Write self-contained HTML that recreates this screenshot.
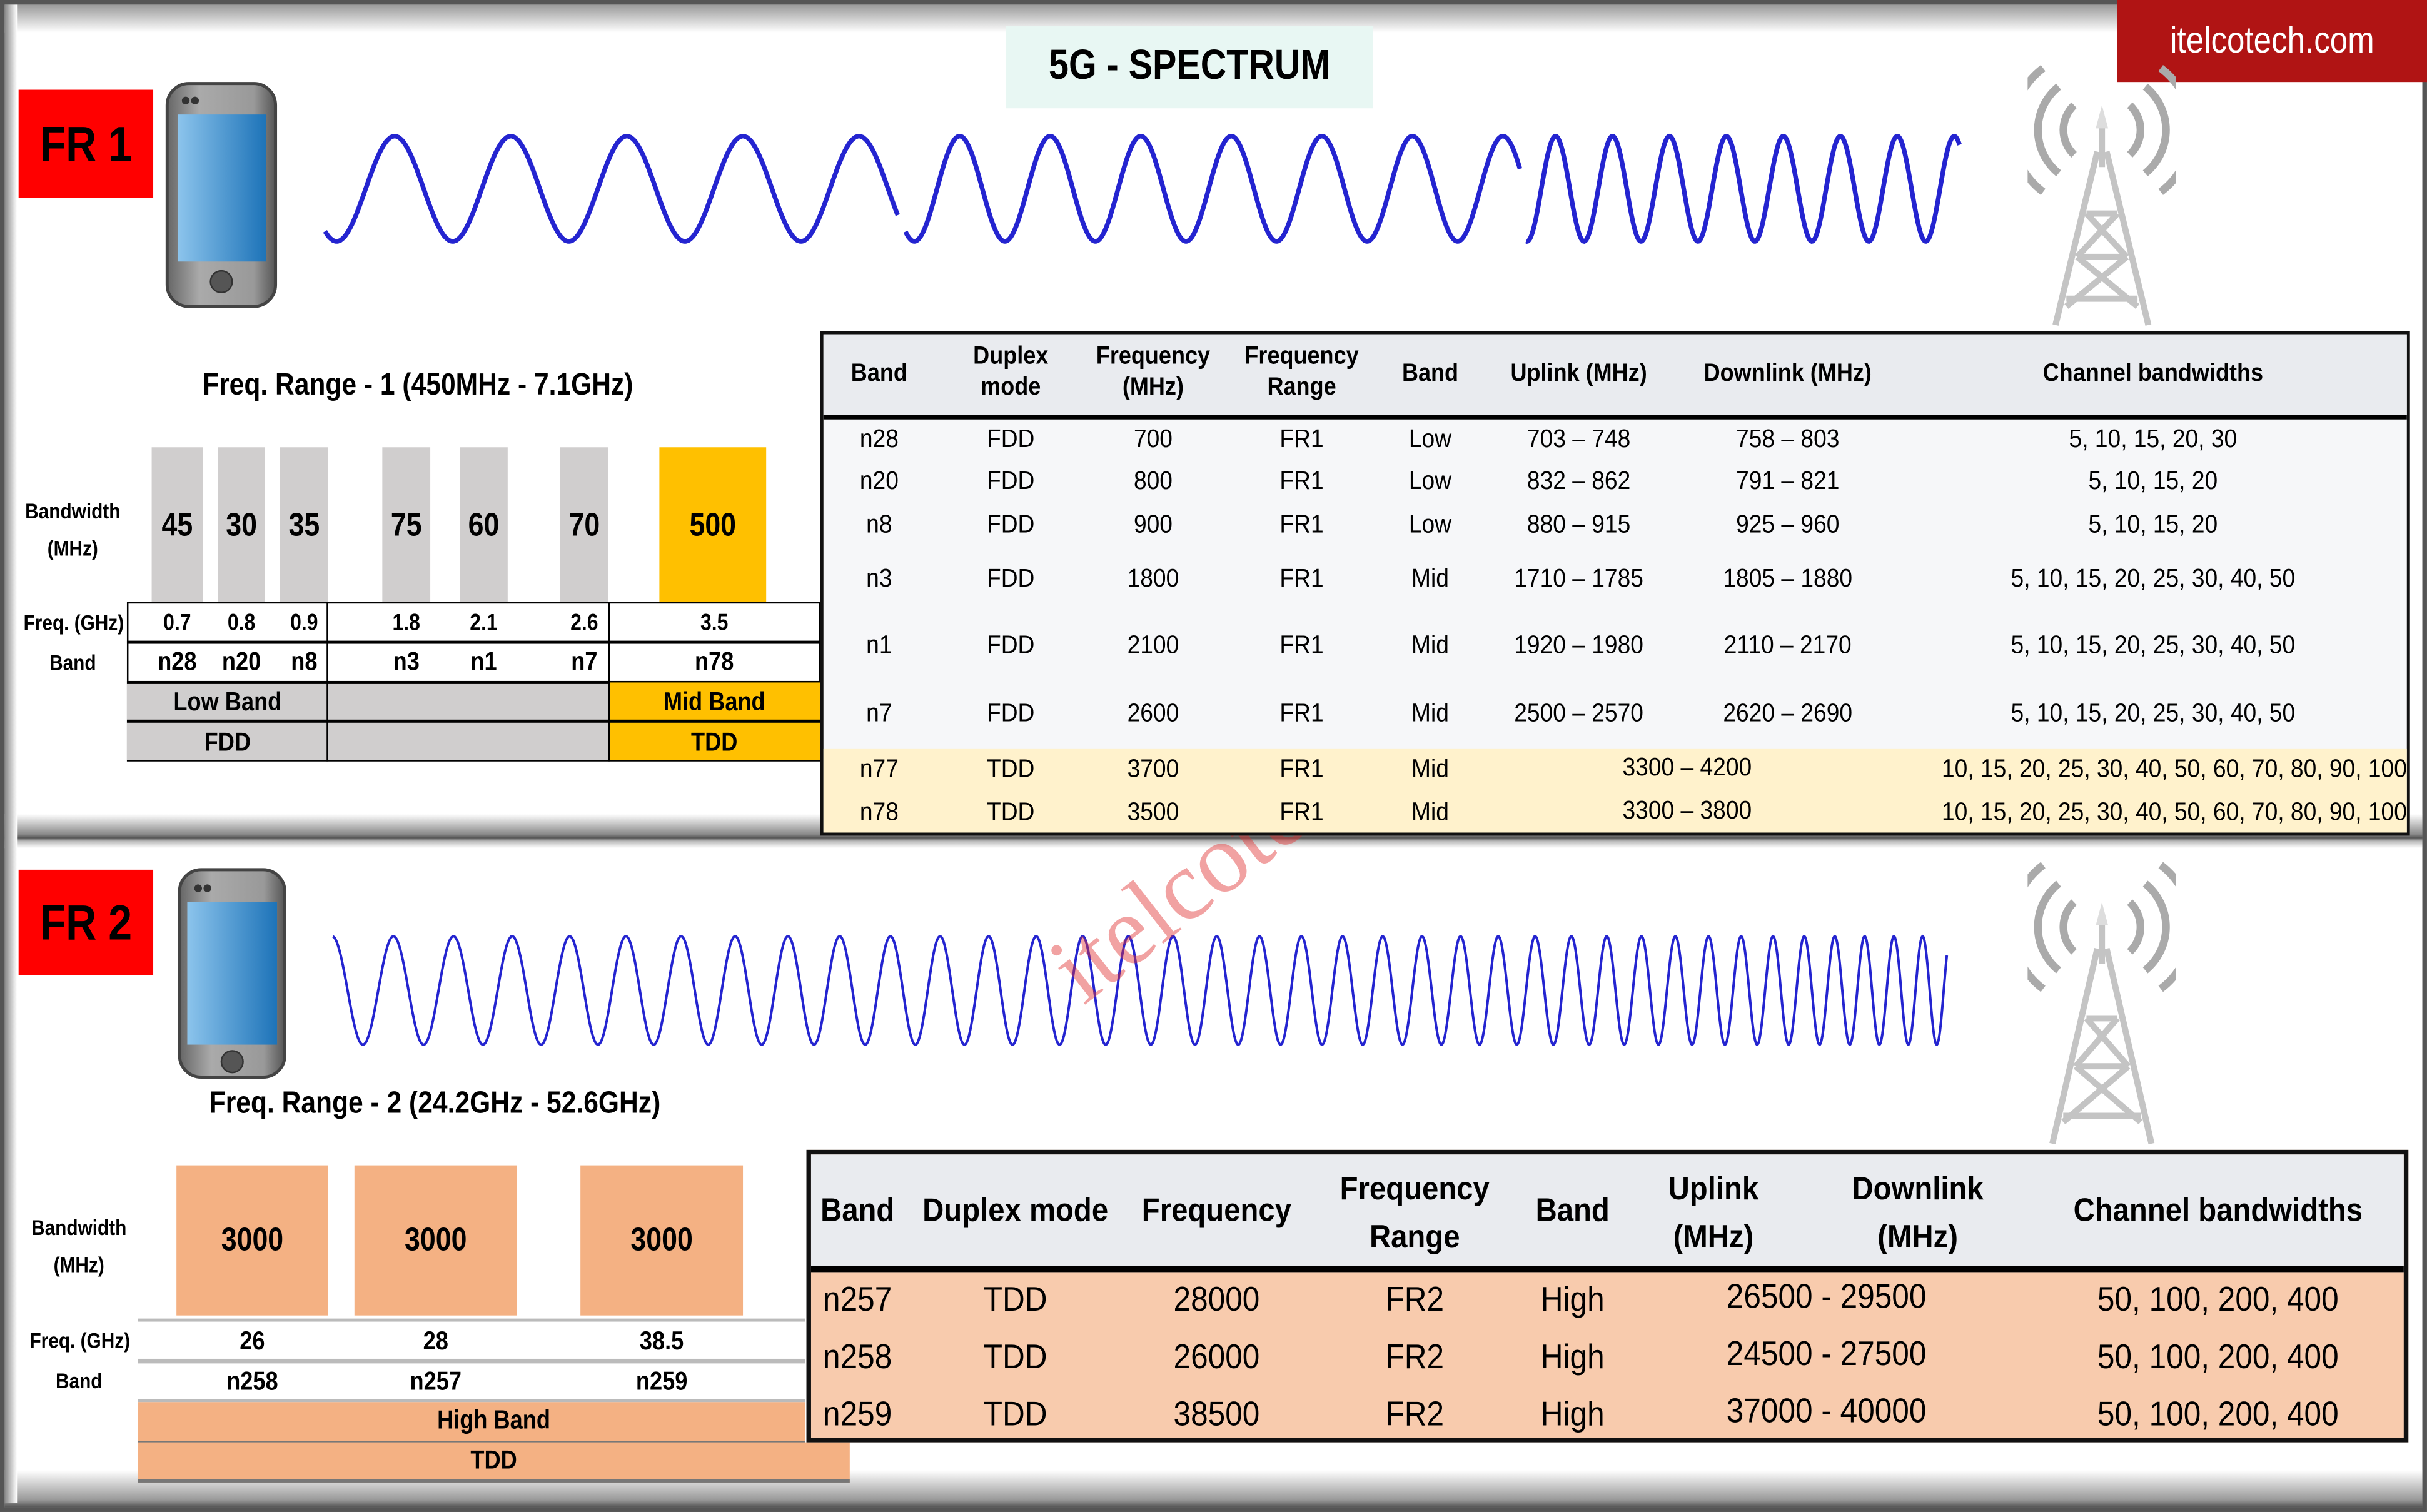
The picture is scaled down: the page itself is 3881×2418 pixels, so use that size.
<!DOCTYPE html>
<html><head><meta charset="utf-8">
<style>
html,body{margin:0;padding:0;background:#fff;overflow:hidden}
body{width:3881px;height:2418px}
#s{position:absolute;left:0;top:0;width:1568px;height:977px;transform:scale(2.4751,2.4749);transform-origin:0 0;font-family:"Liberation Sans Narrow","Liberation Sans",sans-serif;color:#000}
.a{position:absolute}
.c{position:absolute;text-align:center;white-space:nowrap;transform:scaleX(.86)}
.t{transform:scaleX(.91)}
.b{font-weight:bold}
.gbar{position:absolute;background:#d0cece;top:289px;height:100px}
.obar{position:absolute;background:#f4b183;top:753px;height:97px}
</style></head><body>
<div id="s">
<div class="a" style="left:0;top:0;width:1568px;height:977px;border:3px solid #555;box-sizing:border-box"></div>
<div class="a" style="left:3px;top:3px;width:1562px;height:18px;background:linear-gradient(#9a9a9a,#fff)"></div>
<div class="a" style="left:3px;top:526px;width:1562px;height:22px;background:linear-gradient(#fff,#888 60%,#555 70%,#bbb 80%,#fff)"></div>
<div class="a" style="left:3px;top:950px;width:1562px;height:24px;background:linear-gradient(#fff,#999 80%,#555)"></div>
<div class="a" style="left:3px;top:3px;width:8px;height:968px;background:linear-gradient(90deg,#888,#fff)"></div>

<div class="a" style="left:650px;top:17px;width:237px;height:53px;background:#e8f7f3"></div>
<div class="c b" style="left:650px;top:17px;width:237px;height:53px;line-height:50px;font-size:27px">5G - SPECTRUM</div>
<div class="a" style="left:1368px;top:0;width:200px;height:53px;background:#b01414"></div>
<div class="c" style="left:1368px;top:0;width:200px;height:53px;line-height:54px;color:#fff;font-size:24px">itelcotech.com</div>

<div class="a" style="left:12px;top:58px;width:87px;height:70px;background:#f00"></div>
<div class="c b" style="left:12px;top:58px;width:87px;height:70px;line-height:70px;font-size:32px">FR 1</div>
<div class="a" style="left:12px;top:562px;width:87px;height:68px;background:#f00"></div>
<div class="c b" style="left:12px;top:562px;width:87px;height:68px;line-height:68px;font-size:32px">FR 2</div>

<svg class="a" style="left:105px;top:52px" width="76" height="148" viewBox="0 0 76 148">
<defs><linearGradient id="sc" x1="0" y1="0" x2="1" y2="0"><stop offset="0" stop-color="#8cc4ec"/><stop offset="1" stop-color="#1d73b8"/></linearGradient>
<linearGradient id="bd" x1="0" y1="0" x2="1" y2="0"><stop offset="0" stop-color="#666"/><stop offset=".3" stop-color="#aaa"/><stop offset=".8" stop-color="#999"/><stop offset="1" stop-color="#555"/></linearGradient></defs>
<rect x="3" y="2" width="70" height="144" rx="14" fill="url(#bd)" stroke="#444" stroke-width="2"/>
<circle cx="15" cy="13" r="2.5" fill="#333"/><circle cx="21" cy="13" r="2.5" fill="#333"/>
<rect x="10" y="22" width="57" height="95" fill="url(#sc)"/>
<circle cx="38" cy="130" r="7" fill="#555" stroke="#333"/>
</svg>
<svg class="a" style="left:113px;top:560px" width="74" height="138" viewBox="0 0 74 138">
<rect x="3" y="2" width="68" height="134" rx="14" fill="url(#bd)" stroke="#444" stroke-width="2"/>
<circle cx="15" cy="14" r="2.5" fill="#333"/><circle cx="21" cy="14" r="2.5" fill="#333"/>
<rect x="8" y="23" width="58" height="92" fill="url(#sc)"/>
<circle cx="37" cy="126" r="7" fill="#555" stroke="#333"/>
</svg>

<svg class="a" style="left:1310px;top:38px" width="96" height="175" viewBox="0 0 96 175">
<g fill="none" stroke="#aaa" stroke-width="5">
<path d="M30 30 A22 22 0 0 0 30 62"/><path d="M66 30 A22 22 0 0 1 66 62"/>
<path d="M20 18 A36 36 0 0 0 20 74"/><path d="M76 18 A36 36 0 0 1 76 74"/>
<path d="M10 6 A50 50 0 0 0 10 86"/><path d="M86 6 A50 50 0 0 1 86 86"/>
</g>
<g stroke="#c4c4c4" stroke-width="4" fill="none">
<path d="M48 40 L48 70"/><path d="M45 60 L18 172"/><path d="M51 60 L78 172"/>
<path d="M38 100 L58 100 M32 128 L64 128 M25 155 L71 155"/>
<path d="M38 100 L64 128 M58 100 L32 128 M32 128 L71 160 M64 128 L25 160"/>
</g>
<path d="M44 45 L48 30 L52 45 Z" fill="#ddd"/>
</svg>
<svg class="a" style="left:1310px;top:553px" width="96" height="190" viewBox="0 0 96 190">
<g fill="none" stroke="#aaa" stroke-width="5">
<path d="M30 30 A22 22 0 0 0 30 62"/><path d="M66 30 A22 22 0 0 1 66 62"/>
<path d="M20 18 A36 36 0 0 0 20 74"/><path d="M76 18 A36 36 0 0 1 76 74"/>
<path d="M10 6 A50 50 0 0 0 10 86"/><path d="M86 6 A50 50 0 0 1 86 86"/>
</g>
<g stroke="#c4c4c4" stroke-width="4" fill="none">
<path d="M48 40 L48 70"/><path d="M45 60 L16 186"/><path d="M51 60 L80 186"/>
<path d="M38 105 L58 105 M31 136 L65 136 M23 168 L73 168"/>
<path d="M38 105 L65 136 M58 105 L31 136 M31 136 L73 172 M65 136 L23 172"/>
</g>
<path d="M44 45 L48 30 L52 45 Z" fill="#ddd"/>
</svg>

<svg class="a" style="left:0;top:0" width="1568" height="977">
<path id="w1" fill="none" stroke="#2424d0" stroke-width="3"/>
<path id="w2" fill="none" stroke="#2424d0" stroke-width="1.6"/>
<text x="700" y="650" transform="rotate(-38 700 650)" font-family="Liberation Serif,serif" font-size="64" fill="#e03030" fill-opacity="0.45">itelcotech</text>
</svg>

<div class="c b" style="left:100px;top:238px;width:340px;font-size:20px">Freq. Range - 1 (450MHz - 7.1GHz)</div>
<div class="c b" style="left:10px;top:318px;width:74px;font-size:14px;line-height:24px">Bandwidth<br>(MHz)</div>
<div class="gbar" style="left:98px;width:33px"></div>
<div class="gbar" style="left:141px;width:30px"></div>
<div class="gbar" style="left:181px;width:31px"></div>
<div class="gbar" style="left:247px;width:31px"></div>
<div class="gbar" style="left:297px;width:31px"></div>
<div class="gbar" style="left:362px;width:31px"></div>
<div class="gbar" style="left:426px;width:69px;background:#ffc000"></div>
<div class="c b" style="left:98px;top:328px;width:33px;font-size:21px">45</div>
<div class="c b" style="left:141px;top:328px;width:30px;font-size:21px">30</div>
<div class="c b" style="left:181px;top:328px;width:31px;font-size:21px">35</div>
<div class="c b" style="left:247px;top:328px;width:31px;font-size:21px">75</div>
<div class="c b" style="left:297px;top:328px;width:31px;font-size:21px">60</div>
<div class="c b" style="left:362px;top:328px;width:31px;font-size:21px">70</div>
<div class="c b" style="left:426px;top:328px;width:69px;font-size:21px">500</div>
<div class="c b" style="left:10px;top:394px;width:74px;font-size:14px">Freq. (GHz)</div>
<div class="c b" style="left:10px;top:420px;width:74px;font-size:14px">Band</div>
<div class="a" style="left:82px;top:389px;width:448px;height:103px;border:1.5px solid #000;box-sizing:border-box"></div>
<div class="a" style="left:82px;top:414px;width:448px;border-top:2px solid #000"></div>
<div class="a" style="left:82px;top:440px;width:448px;height:52px;background:#d0cece;border-top:2px solid #000;border-bottom:1.5px solid #000;box-sizing:border-box"></div>
<div class="a" style="left:393px;top:441px;width:137px;height:50px;background:#ffc000"></div>
<div class="a" style="left:82px;top:465px;width:448px;border-top:2px solid #000"></div>
<div class="a" style="left:211px;top:389px;height:103px;border-left:1.5px solid #000"></div>
<div class="a" style="left:393px;top:389px;height:103px;border-left:1.5px solid #000"></div>
<div class="c b" style="left:98px;top:394px;width:33px;font-size:15px">0.7</div>
<div class="c b" style="left:141px;top:394px;width:30px;font-size:15px">0.8</div>
<div class="c b" style="left:181px;top:394px;width:31px;font-size:15px">0.9</div>
<div class="c b" style="left:247px;top:394px;width:31px;font-size:15px">1.8</div>
<div class="c b" style="left:297px;top:394px;width:31px;font-size:15px">2.1</div>
<div class="c b" style="left:362px;top:394px;width:31px;font-size:15px">2.6</div>
<div class="c b" style="left:393px;top:394px;width:137px;font-size:15px">3.5</div>
<div class="c b" style="left:96px;top:418px;width:37px;font-size:17px">n28</div>
<div class="c b" style="left:139px;top:418px;width:34px;font-size:17px">n20</div>
<div class="c b" style="left:181px;top:418px;width:31px;font-size:17px">n8</div>
<div class="c b" style="left:247px;top:418px;width:31px;font-size:17px">n3</div>
<div class="c b" style="left:297px;top:418px;width:31px;font-size:17px">n1</div>
<div class="c b" style="left:362px;top:418px;width:31px;font-size:17px">n7</div>
<div class="c b" style="left:393px;top:418px;width:137px;font-size:17px">n78</div>
<div class="c b" style="left:82px;top:444px;width:130px;font-size:17px">Low Band</div>
<div class="c b" style="left:393px;top:444px;width:137px;font-size:17px">Mid Band</div>
<div class="c b" style="left:82px;top:470px;width:130px;font-size:17px">FDD</div>
<div class="c b" style="left:393px;top:470px;width:137px;font-size:17px">TDD</div>

<div class="a" style="left:530px;top:214px;width:1027px;height:326px;background:#f6f7f9;border:2px solid #111;box-sizing:border-box"></div>
<div class="a" style="left:532px;top:216px;width:1023px;height:52px;background:#e9ebef;border-bottom:3px solid #000"></div>
<div class="a" style="left:532px;top:484px;width:1023px;height:54px;background:#fff2cc"></div>
<div id="t1"></div>

<div class="c b" style="left:100px;top:702px;width:362px;font-size:20px">Freq. Range - 2 (24.2GHz - 52.6GHz)</div>
<div class="c b" style="left:14px;top:781px;width:74px;font-size:14px;line-height:24px">Bandwidth<br>(MHz)</div>
<div class="obar" style="left:114px;width:98px"></div>
<div class="obar" style="left:229px;width:105px"></div>
<div class="obar" style="left:375px;width:105px"></div>
<div class="c b" style="left:114px;top:790px;width:98px;font-size:21px">3000</div>
<div class="c b" style="left:229px;top:790px;width:105px;font-size:21px">3000</div>
<div class="c b" style="left:375px;top:790px;width:105px;font-size:21px">3000</div>
<div class="c b" style="left:14px;top:858px;width:74px;font-size:14px">Freq. (GHz)</div>
<div class="c b" style="left:14px;top:884px;width:74px;font-size:14px">Band</div>
<div class="a" style="left:89px;top:852px;width:431px;height:54px;border-top:2px solid #bbb;border-bottom:2px solid #bbb;box-sizing:border-box"></div>
<div class="a" style="left:89px;top:878px;width:431px;border-top:3px solid #bbb"></div>
<div class="a" style="left:89px;top:906px;width:431px;height:25px;background:#f4b183;border-bottom:2px solid #777"></div>
<div class="a" style="left:89px;top:932px;width:460px;height:24px;background:#f4b183;border-bottom:2px solid #777"></div>
<div class="c b" style="left:114px;top:857px;width:98px;font-size:17px">26</div>
<div class="c b" style="left:229px;top:857px;width:105px;font-size:17px">28</div>
<div class="c b" style="left:375px;top:857px;width:105px;font-size:17px">38.5</div>
<div class="c b" style="left:114px;top:883px;width:98px;font-size:17px">n258</div>
<div class="c b" style="left:229px;top:883px;width:105px;font-size:17px">n257</div>
<div class="c b" style="left:375px;top:883px;width:105px;font-size:17px">n259</div>
<div class="c b" style="left:89px;top:908px;width:460px;font-size:17px">High Band</div>
<div class="c b" style="left:89px;top:934px;width:460px;font-size:17px">TDD</div>

<div class="a" style="left:521px;top:743px;width:1035px;height:189px;background:#f8cbad;border:3px solid #111;box-sizing:border-box"></div>
<div class="a" style="left:524px;top:746px;width:1029px;height:72px;background:#e9ebef;border-bottom:4px solid #000"></div>
<div id="t2"></div>
</div>
<script>
function wave(segs,cy,amp){var d="";segs.forEach(function(s){var x0=s[0],x1=s[1],p=s[2],pk=s[3];var first=true;for(var x=x0;x<=x1;x+=0.5){var y=cy-amp*Math.cos(2*Math.PI*(x-pk)/p);d+=(first?"M":"L")+x.toFixed(1)+" "+y.toFixed(1)+" ";first=false;}});return d;}
document.getElementById("w1").setAttribute("d",wave([[210,580,75,255],[585,982,58.5,620],[986,1266,36.8,1005]],122,34));
(function(){var d="",ph=0,x0=215,x1=1258,first=true;for(var x=x0;x<=x1;x+=0.4){var t=(x-x0)/(x1-x0);var p=40-22*t;ph+=2*Math.PI*0.4/p;var y=640+35*Math.cos(ph+Math.PI);d+=(first?"M":"L")+x.toFixed(1)+" "+y.toFixed(1)+" ";first=false;}document.getElementById("w2").setAttribute("d",d);})();
function put(id,html){document.getElementById(id).innerHTML+=html;}
function cell(x,y,txt,fs,b){return '<div class="c t'+(b?' b':'')+'" style="left:'+(x-150)+'px;width:300px;top:'+(y-fs*0.6)+'px;font-size:'+fs+'px;line-height:'+(fs*1.2)+'px">'+txt+'</div>';}
var h="";
[[568,"Band",242],[653,"Duplex<br>mode",242],[745,"Frequency<br>(MHz)",242],[841,"Frequency<br>Range",242],[924,"Band",242],[1020,"Uplink (MHz)",242],[1155,"Downlink (MHz)",242],[1391,"Channel bandwidths",242]].forEach(function(c){var two=c[1].indexOf("<br>")>0;h+=cell(c[0],two?c[2]-11:c[2],c[1],16,true);});
var rows=[[285,"n28","FDD","700","FR1","Low","703 – 748","758 – 803","5, 10, 15, 20, 30"],[312,"n20","FDD","800","FR1","Low","832 – 862","791 – 821","5, 10, 15, 20"],[340,"n8","FDD","900","FR1","Low","880 – 915","925 – 960","5, 10, 15, 20"],[375,"n3","FDD","1800","FR1","Mid","1710 – 1785","1805 – 1880","5, 10, 15, 20, 25, 30, 40, 50"],[418,"n1","FDD","2100","FR1","Mid","1920 – 1980","2110 – 2170","5, 10, 15, 20, 25, 30, 40, 50"],[462,"n7","FDD","2600","FR1","Mid","2500 – 2570","2620 – 2690","5, 10, 15, 20, 25, 30, 40, 50"]];
var xs=[568,653,745,841,924,1020,1155,1391];
rows.forEach(function(r){for(var i=0;i<8;i++)h+=cell(xs[i],r[0],r[i+1],16.5,false);});
[[498,"n77","3700","3300 – 4200"],[526,"n78","3500","3300 – 3800"]].forEach(function(r){h+=cell(568,r[0],r[1],16.5);h+=cell(653,r[0],"TDD",16.5);h+=cell(745,r[0],r[2],16.5);h+=cell(841,r[0],"FR1",16.5);h+=cell(924,r[0],"Mid",16.5);h+=cell(1090,r[0]-1,r[3],16.5);h+=cell(1391,r[0],"10, 15, 20, 25, 30, 40, 50, 60, 70, 80, 90, 100",16.5);});
put("t1",h);
h="";
[[554,"Band",783],[656,"Duplex mode",783],[786,"Frequency",783],[914,"Frequency<br>Range",783],[1016,"Band",783],[1107,"Uplink<br>(MHz)",783],[1239,"Downlink<br>(MHz)",783],[1433,"Channel bandwidths",783]].forEach(function(c){var two=c[1].indexOf("<br>")>0;h+='<div class="c t b" style="left:'+(c[0]-150)+'px;width:300px;top:'+(two?c[2]-30:c[2]-13)+'px;font-size:21px;line-height:'+(two?31:26)+'px">'+c[1]+'</div>';});
[[840,"n257","28000","26500 - 29500"],[877,"n258","26000","24500 - 27500"],[914,"n259","38500","37000 - 40000"]].forEach(function(r){h+=cell(554,r[0],r[1],22);h+=cell(656,r[0],"TDD",22);h+=cell(786,r[0],r[2],22);h+=cell(914,r[0],"FR2",22);h+=cell(1016,r[0],"High",22);h+=cell(1180,r[0]-2,r[3],22);h+=cell(1433,r[0],"50, 100, 200, 400",22);});
put("t2",h);
</script>
</body></html>
